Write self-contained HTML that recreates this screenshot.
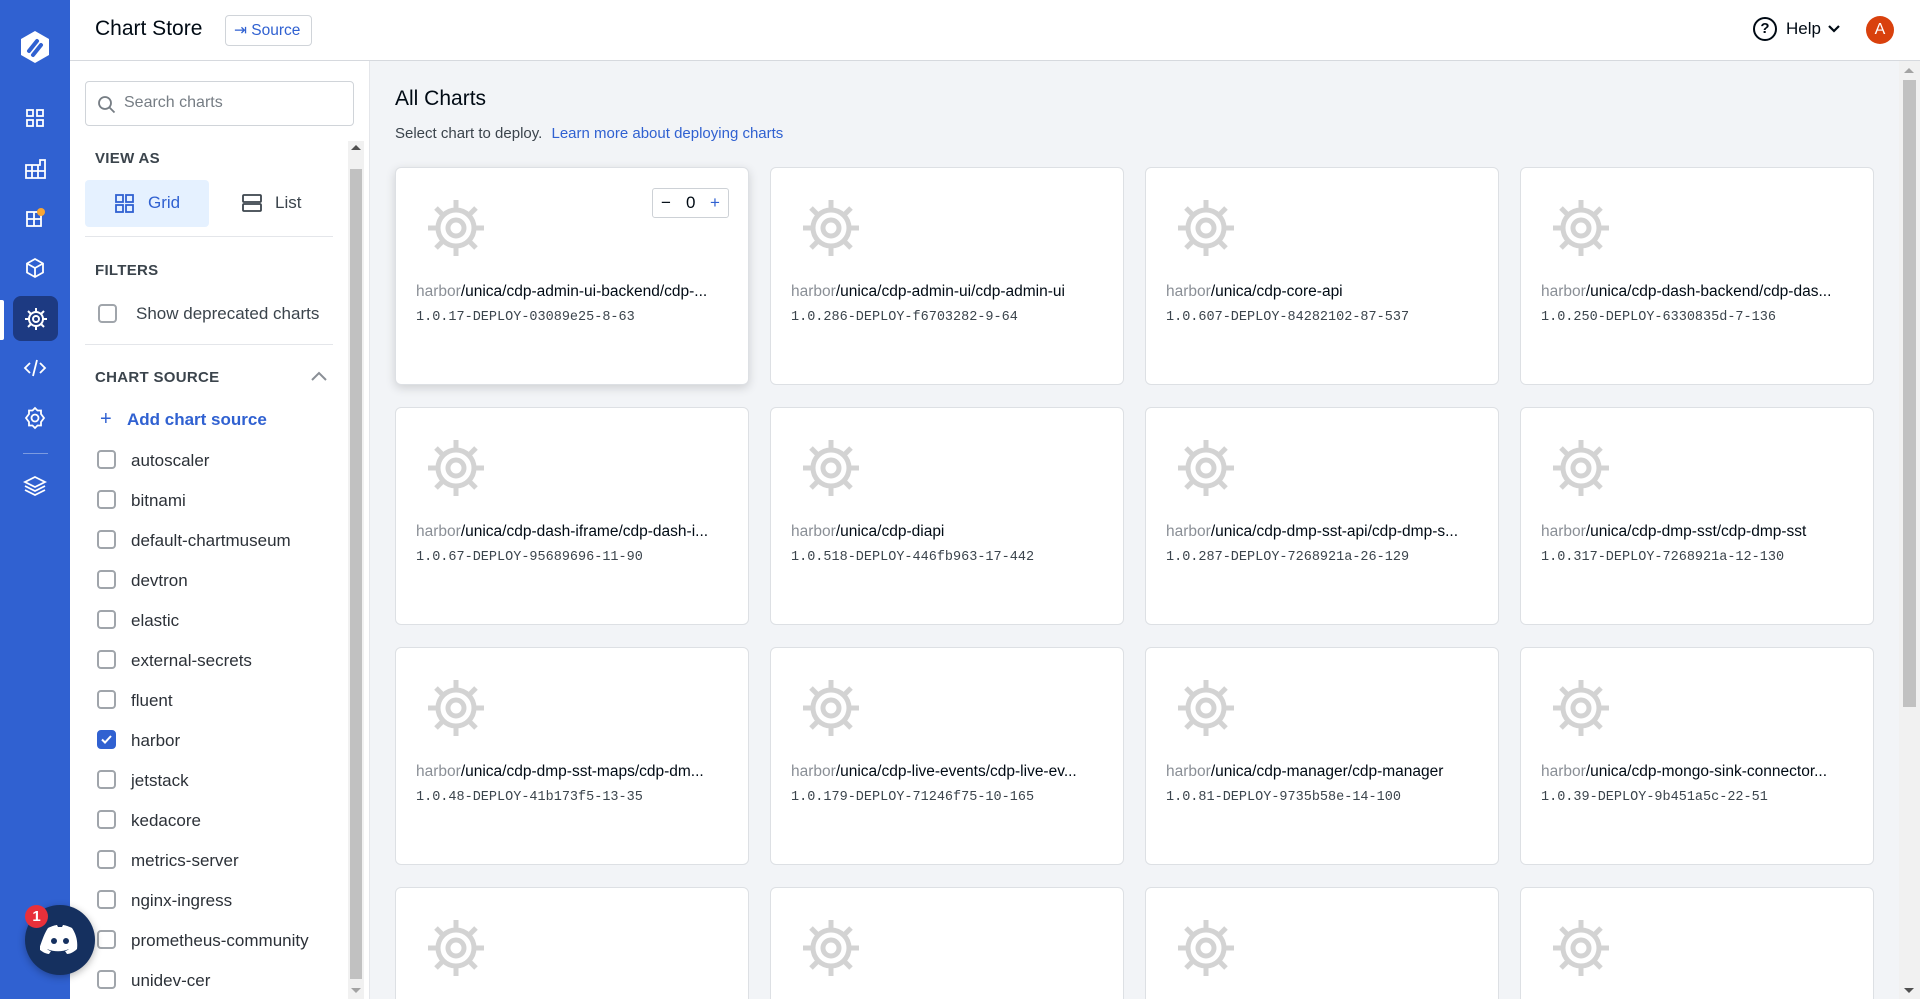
<!DOCTYPE html>
<html style="overflow:hidden;height:999px"><head><meta charset="utf-8"><style>
*{box-sizing:border-box;margin:0;padding:0}
body{width:1920px;height:999px;overflow:hidden;font-family:"Liberation Sans",sans-serif;background:#fff;position:relative;color:#000a14}
.side{position:absolute;left:0;top:0;width:70px;height:999px;background:#3061d1}
.side .ic{position:absolute;left:17px;width:36px;height:36px;display:flex;align-items:center;justify-content:center}
.hdr{position:absolute;left:70px;top:0;right:0;height:61px;border-bottom:1px solid #d6d9de;background:#fff}
.left{position:absolute;left:70px;top:61px;width:300px;bottom:0;background:#fff;border-right:1px solid #e4e6ea;overflow:hidden}
.main{position:absolute;left:370px;top:61px;right:0;bottom:0;background:#f2f4f7;overflow:hidden}
.lab{position:absolute;left:25px;font-size:15px;color:#3b444c;font-weight:bold;letter-spacing:.3px}
.cb{position:absolute;left:27px;width:19px;height:19px;border:2px solid #a0a5ab;border-radius:4px}
.it{position:absolute;left:61px;font-size:17px;color:#2c3138}
.card{position:absolute;width:354px;height:218px;background:#fff;border:1px solid #dde0e4;border-radius:6px}
.card svg{position:absolute;left:30px;top:30px}
.nm{position:absolute;left:20px;top:115px;font-size:15.5px;color:#000a14;white-space:nowrap}
.nm span{color:#8a8f96}
.vr{position:absolute;left:20px;top:142px;font-family:"Liberation Mono",monospace;font-size:13.5px;color:#3b444c}
</style></head><body>
<div class="side">
 <div class="ic" style="top:27px;left:15px;width:40px;height:40px"><svg width="36" height="36" viewBox="0 0 36 36"><path d="M18 2 L32 10 L32 26 L18 34 L4 26 L4 10Z" fill="#fff"/><path d="M12 22 L20 12 M16 26 L24 16" stroke="#3061d1" stroke-width="4" stroke-linecap="round"/></svg></div>
 <div class="ic" style="top:100px"><svg width="20" height="20" viewBox="0 0 20 20" fill="none" stroke="#fff" stroke-width="1.8"><rect x="2" y="2" width="6" height="6"/><rect x="12" y="2" width="6" height="6"/><rect x="2" y="12" width="6" height="6"/><rect x="12" y="12" width="6" height="6"/></svg></div>
 <div class="ic" style="top:150px"><svg width="22" height="22" viewBox="0 0 22 22" fill="none" stroke="#fff" stroke-width="1.8"><path d="M2 8h14V3h5v18H2zM2 14h19M8 8v13M14 8v13"/></svg></div>
 <div class="ic" style="top:200px"><svg width="22" height="22" viewBox="0 0 22 22" fill="none" stroke="#fff" stroke-width="1.8"><rect x="3" y="5" width="14" height="14"/><path d="M3 12h14M10 5v14"/><circle cx="17" cy="5" r="4" fill="#f7a534" stroke="none"/></svg></div>
 <div class="ic" style="top:250px"><svg width="22" height="22" viewBox="0 0 22 22" fill="none" stroke="#fff" stroke-width="1.8"><path d="M11 2l8 4.5v9L11 20l-8-4.5v-9zM3 6.5l8 4.5 8-4.5M11 11v9"/></svg></div>
 <div style="position:absolute;left:0;top:300px;width:4px;height:40px;background:#fff;border-radius:0 2px 2px 0"></div>
 <div class="ic" style="top:296px;left:13px;width:45px;height:45px;background:#1d3a82;border-radius:8px"><svg width="26" height="26" viewBox="0 0 26 26" fill="none" stroke="#fff" stroke-width="2"><circle cx="13" cy="13" r="7"/><circle cx="13" cy="13" r="3"/><path d="M13 2v4M13 20v4M2 13h4M20 13h4M5 5l3 3M18 18l3 3M5 21l3-3M18 8l3-3"/></svg></div>
 <div class="ic" style="top:350px"><svg width="24" height="20" viewBox="0 0 24 20" fill="none" stroke="#fff" stroke-width="1.8"><path d="M7 5l-5 5 5 5M17 5l5 5-5 5M14 2l-4 16"/></svg></div>
 <div class="ic" style="top:400px"><svg width="24" height="24" viewBox="0 0 24 24" fill="none" stroke="#fff" stroke-width="1.8"><path d="M12 2l2.5 2.5h3.5v3.5L21 12l-3 4v3.5h-3.5L12 22l-2.5-2.5H6V16l-3-4 3-4V4.5h3.5z"/><circle cx="12" cy="12" r="3.5"/></svg></div>
 <div style="position:absolute;left:23px;top:453px;width:25px;height:1px;background:#7c9be0"></div>
 <div class="ic" style="top:468px"><svg width="24" height="22" viewBox="0 0 24 22" fill="none" stroke="#fff" stroke-width="1.8"><path d="M12 2l10 5-10 5L2 7zM2 11l10 5 10-5M2 15l10 5 10-5"/></svg></div>
</div>

<div class="hdr">
 <div style="position:absolute;left:25px;top:17px;font-size:21px;color:#000a14">Chart Store</div>
 <div style="position:absolute;left:155px;top:15px;width:87px;height:31px;border:1px solid #d0d4d9;border-radius:4px;font-size:15.5px;color:#3061d1;line-height:29px;padding-left:8px">⇥ Source</div>
 <div style="position:absolute;left:1683px;top:17px;width:24px;height:24px;border:2.5px solid #000a14;border-radius:50%;text-align:center;font-size:15px;font-weight:bold;line-height:19px">?</div>
 <div style="position:absolute;left:1716px;top:19px;font-size:17px">Help</div>
 <svg style="position:absolute;left:1757px;top:24px" width="14" height="10" viewBox="0 0 14 10"><path d="M2 2l5 5 5-5" stroke="#000a14" stroke-width="2.2" fill="none"/></svg>
 <div style="position:absolute;left:1796px;top:16px;width:28px;height:28px;border-radius:50%;background:#d9410d;color:#fff;text-align:center;line-height:28px;font-size:16px">A</div>
</div>

<div class="left">
 <div style="position:absolute;left:15px;top:20px;width:269px;height:45px;border:1px solid #d0d4d9;border-radius:4px"><svg style="position:absolute;left:11px;top:13px" width="20" height="20" viewBox="0 0 20 20" fill="none" stroke="#767d84" stroke-width="1.8"><circle cx="8" cy="8" r="6"/><path d="M12.5 12.5l5 5"/></svg><div style="position:absolute;left:38px;top:12px;font-size:16px;color:#767d84">Search charts</div></div>
 <div style="position:absolute;right:5px;top:80px;width:16px;bottom:0;background:#f1f1f1"><div style="position:absolute;left:2px;top:28px;width:12px;bottom:20px;background:#c1c1c1"></div><div style="position:absolute;left:3px;top:4px;border:5px solid transparent;border-bottom-color:#505050;border-top:0"></div><div style="position:absolute;left:3px;bottom:6px;border:5px solid transparent;border-top-color:#a3a3a3;border-bottom:0"></div></div>
 <div class="lab" style="top:89px">VIEW AS</div>
 <div style="position:absolute;left:15px;top:119px;width:124px;height:47px;background:#e5f1ff;border-radius:4px"><svg style="position:absolute;left:30px;top:14px" width="19" height="19" viewBox="0 0 19 19" fill="none" stroke="#3061d1" stroke-width="1.8"><rect x="1" y="1" width="7" height="7"/><rect x="11" y="1" width="7" height="7"/><rect x="1" y="11" width="7" height="7"/><rect x="11" y="11" width="7" height="7"/></svg><div style="position:absolute;left:63px;top:13px;font-size:17px;color:#3061d1">Grid</div></div>
 <svg style="position:absolute;left:172px;top:133px" width="20" height="19" viewBox="0 0 20 19" fill="none" stroke="#3b444c" stroke-width="1.8"><rect x="1" y="1" width="18" height="7" rx="1"/><rect x="1" y="10" width="18" height="7" rx="1"/></svg>
 <div style="position:absolute;left:205px;top:132px;font-size:17px;color:#3b444c">List</div>
 <div style="position:absolute;left:15px;top:175px;width:248px;height:1px;background:#e4e6ea"></div>
 <div class="lab" style="top:201px">FILTERS</div>
 <div class="cb" style="top:243px;left:28px"></div><div class="it" style="top:243px;left:66px;color:#3b444c">Show deprecated charts</div>
 <div style="position:absolute;left:15px;top:283px;width:248px;height:1px;background:#e4e6ea"></div>
 <div class="lab" style="top:308px">CHART SOURCE</div>
 <svg style="position:absolute;left:240px;top:309px" width="18" height="12" viewBox="0 0 18 12"><path d="M2 10l7-7 7 7" stroke="#8a8f96" stroke-width="2" fill="none"/></svg>
 <div style="position:absolute;left:30px;top:347px;font-size:20px;color:#3061d1">+</div>
 <div style="position:absolute;left:57px;top:349px;font-size:17px;color:#3061d1;font-weight:bold">Add chart source</div>
 <div class="cb" style="top:389px"></div><div class="it" style="top:390px">autoscaler</div>
 <div class="cb" style="top:429px"></div><div class="it" style="top:430px">bitnami</div>
 <div class="cb" style="top:469px"></div><div class="it" style="top:470px">default-chartmuseum</div>
 <div class="cb" style="top:509px"></div><div class="it" style="top:510px">devtron</div>
 <div class="cb" style="top:549px"></div><div class="it" style="top:550px">elastic</div>
 <div class="cb" style="top:589px"></div><div class="it" style="top:590px">external-secrets</div>
 <div class="cb" style="top:629px"></div><div class="it" style="top:630px">fluent</div>
 <div class="cb" style="top:669px;background:#3061d1;border-color:#3061d1"><svg style="position:absolute;left:1px;top:2px" width="13" height="11" viewBox="0 0 13 11"><path d="M2 5.5l3 3 6-6.5" stroke="#fff" stroke-width="2" fill="none"/></svg></div><div class="it" style="top:670px">harbor</div>
 <div class="cb" style="top:709px"></div><div class="it" style="top:710px">jetstack</div>
 <div class="cb" style="top:749px"></div><div class="it" style="top:750px">kedacore</div>
 <div class="cb" style="top:789px"></div><div class="it" style="top:790px">metrics-server</div>
 <div class="cb" style="top:829px"></div><div class="it" style="top:830px">nginx-ingress</div>
 <div class="cb" style="top:869px"></div><div class="it" style="top:870px">prometheus-community</div>
 <div class="cb" style="top:909px"></div><div class="it" style="top:910px">unidev-cer</div>
</div>

<div class="main">
 <div style="position:absolute;left:25px;top:26px;font-size:21px;color:#000a14">All Charts</div>
 <div style="position:absolute;left:25px;top:64px;font-size:15px;color:#3b444c">Select chart to deploy. <span style="color:#3061d1;margin-left:5px">Learn more about deploying charts</span></div>
 <div style="position:absolute;right:0;top:0;width:21px;bottom:0;background:#f1f1f1;z-index:2"><div style="position:absolute;left:4px;top:19px;width:13px;height:627px;background:#c1c1c1"></div><div style="position:absolute;left:5px;top:7px;border:5px solid transparent;border-bottom-color:#a3a3a3;border-top:0"></div><div style="position:absolute;left:5px;bottom:6px;border:5px solid transparent;border-top-color:#505050;border-bottom:0"></div></div>
 <div id="g"></div>
</div>

<div style="position:absolute;left:25px;top:905px;width:70px;height:70px;border-radius:50%;background:#15305f;box-shadow:0 2px 8px rgba(0,0,0,.3);z-index:5"><svg style="position:absolute;left:15px;top:20px" width="40" height="30" viewBox="0 0 40 30"><path d="M8 3c4-2 8-3 9-3l1 2h4l1-2c1 0 5 1 9 3 4 6 6 13 5 21-3 3-7 5-10 5l-2-3c1 0 3-1 4-2-7 3-15 3-22 0 1 1 3 2 4 2l-2 3c-3 0-7-2-10-5C2 16 4 9 8 3z" fill="#fff"/><circle cx="14" cy="16" r="3" fill="#15305f"/><circle cx="26" cy="16" r="3" fill="#15305f"/></svg></div>
<div style="position:absolute;left:25px;top:905px;width:23px;height:23px;border-radius:50%;background:#e8303a;color:#fff;font-size:15px;font-weight:bold;text-align:center;line-height:23px;z-index:6">1</div>
<script>
var d=[["/unica/cdp-admin-ui-backend/cdp-...","1.0.17-DEPLOY-03089e25-8-63"],["/unica/cdp-admin-ui/cdp-admin-ui","1.0.286-DEPLOY-f6703282-9-64"],["/unica/cdp-core-api","1.0.607-DEPLOY-84282102-87-537"],["/unica/cdp-dash-backend/cdp-das...","1.0.250-DEPLOY-6330835d-7-136"],
["/unica/cdp-dash-iframe/cdp-dash-i...","1.0.67-DEPLOY-95689696-11-90"],["/unica/cdp-diapi","1.0.518-DEPLOY-446fb963-17-442"],["/unica/cdp-dmp-sst-api/cdp-dmp-s...","1.0.287-DEPLOY-7268921a-26-129"],["/unica/cdp-dmp-sst/cdp-dmp-sst","1.0.317-DEPLOY-7268921a-12-130"],
["/unica/cdp-dmp-sst-maps/cdp-dm...","1.0.48-DEPLOY-41b173f5-13-35"],["/unica/cdp-live-events/cdp-live-ev...","1.0.179-DEPLOY-71246f75-10-165"],["/unica/cdp-manager/cdp-manager","1.0.81-DEPLOY-9735b58e-14-100"],["/unica/cdp-mongo-sink-connector...","1.0.39-DEPLOY-9b451a5c-22-51"],
["",""],["",""],["",""],["",""]];
var ic='<svg width="60" height="60" viewBox="0 0 60 60" fill="none" stroke="#d3d3d3" stroke-width="5"><circle cx="30" cy="30" r="18"/><circle cx="30" cy="30" r="8"/><path d="M30 2v10M30 48v10M2 30h10M48 30h10M10 10l7 7M43 43l7 7M10 50l7-7M43 17l7-7"/></svg>';
var h='';d.forEach(function(c,i){var x=25+(i%4)*375,y=106+Math.floor(i/4)*240;
h+='<div class="card" style="left:'+x+'px;top:'+y+'px'+(i==0?';box-shadow:0 3px 10px rgba(0,0,0,.15)':'')+'">'+ic+(c[0]?'<div class="nm"><span>harbor</span>'+c[0]+'</div><div class="vr">'+c[1]+'</div>':'')+(i==0?'<div style="position:absolute;left:256px;top:20px;width:77px;height:30px;border:1px solid #cdd1d6;border-radius:3px;font-size:17px;line-height:28px"><span style="position:absolute;left:8px">−</span><span style="position:absolute;left:33px">0</span><span style="position:absolute;left:57px;color:#3061d1">+</span></div>':'')+'</div>';});
document.getElementById('g').innerHTML=h;
</script>
</body></html>
